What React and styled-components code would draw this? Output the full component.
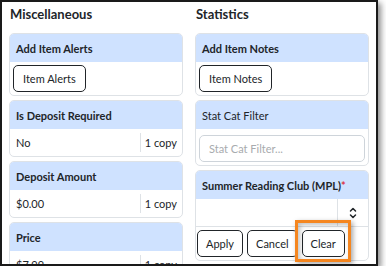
import React from 'react';
import styled, { createGlobalStyle } from 'styled-components';

const GlobalStyle = createGlobalStyle`
  body {
    margin: 0;
    background: #fff;
    font-family: Lato, "Noto Sans", sans-serif;
    color: #212529;
  }
`;

const Frame = styled.div`
  position: relative;
  width: 374px;
  height: 262px;
  border: 2px solid #1a1a1a;
  box-shadow: 3px 3px 6px rgba(0, 0, 0, 0.45);
  overflow: hidden;
  background: #fff;
`;

const Columns = styled.div`
  display: grid;
  grid-template-columns: 174px 174px;
  column-gap: 12px;
  padding-left: 7px;
`;

const Column = styled.div`
  display: flex;
  flex-direction: column;
`;

const Heading = styled.h3`
  margin: 0;
  height: 31px;
  line-height: 25px;
  font-size: 13px;
  font-weight: 700;
  padding-left: 1px;
`;

const Card = styled.div`
  border: 1px solid #dee2e6;
  border-radius: 5px;
  margin-bottom: 4px;
  overflow: hidden;
`;

const CardHeader = styled.div`
  height: 28px;
  display: flex;
  align-items: center;
  padding-left: 6px;
  background: #cfe2ff;
  font-size: 11px;
  font-weight: ${(p) => (p.plain ? 400 : 700)};
  white-space: nowrap;
`;

const Required = styled.span`
  color: #dc3545;
`;

const CardBody = styled.div`
  padding: 3px 3px 3px ${(p) => (p.tight ? 1 : 3)}px;
  display: flex;
  gap: 4px;
`;

const OutlineButton = styled.button`
  box-sizing: border-box;
  height: 27px;
  padding: 0 ${(p) => p.pad}px;
  border: 1px solid #212529;
  border-radius: 5px;
  background: #fff;
  font-family: inherit;
  font-size: 11px;
  color: #212529;
`;

const ValueRow = styled.div`
  height: 27px;
  display: flex;
  align-items: center;
  font-size: 11px;
`;

const Value = styled.div`
  flex: 1;
  padding-left: 6px;
`;

const Count = styled.div`
  border-left: 1px solid #dee2e6;
  padding: 0 5px 0 4px;
  line-height: 19px;
`;

const FilterBody = styled.div`
  padding: 6px 3px 3px;
`;

const TextInput = styled.input`
  box-sizing: border-box;
  width: 100%;
  height: 27px;
  border: 1px solid #ced4da;
  border-radius: 5px;
  padding: 0 9px;
  font-family: inherit;
  font-size: 11px;
  &::placeholder {
    color: #a8abae;
  }
`;

const SelectBox = styled.div`
  display: flex;
  height: 27px;
  border-bottom: 1px solid #dee2e6;
`;

const SelectField = styled.div`
  flex: 1;
  border-right: 1px solid #dee2e6;
`;

const SelectArrow = styled.div`
  width: 30px;
  display: flex;
  align-items: center;
  justify-content: center;
`;

const Highlight = styled.div`
  position: absolute;
  left: 293px;
  top: 218px;
  width: 50px;
  height: 36px;
  border: 3px solid #f5861f;
  box-shadow: 2px 2px 5px rgba(0, 0, 0, 0.35), inset 2px 2px 5px rgba(0, 0, 0, 0.25);
  pointer-events: none;
`;

const Updown = () => (
  <svg width="8" height="12" viewBox="0 0 8 12" fill="none" stroke="#212529" strokeWidth="1.5" strokeLinecap="round" strokeLinejoin="round">
    <path d="M1.5 4 L4 1.5 L6.5 4" />
    <path d="M1.5 8 L4 10.5 L6.5 8" />
  </svg>
);

const ButtonCard = ({ title, label }) => (
  <Card>
    <CardHeader>{title}</CardHeader>
    <CardBody>
      <OutlineButton pad={9}>{label}</OutlineButton>
    </CardBody>
  </Card>
);

const CopyCard = ({ title, value }) => (
  <Card>
    <CardHeader>{title}</CardHeader>
    <ValueRow>
      <Value>{value}</Value>
      <Count>1 copy</Count>
    </ValueRow>
  </Card>
);

export default function App() {
  return (
    <>
      <GlobalStyle />
      <Frame>
        <Columns>
          <Column>
            <Heading>Miscellaneous</Heading>
            <ButtonCard title="Add Item Alerts" label="Item Alerts" />
            <CopyCard title="Is Deposit Required" value="No" />
            <CopyCard title="Deposit Amount" value="$0.00" />
            <CopyCard title="Price" value="$7.99" />
          </Column>
          <Column>
            <Heading>Statistics</Heading>
            <ButtonCard title="Add Item Notes" label="Item Notes" />
            <Card>
              <CardHeader plain>Stat Cat Filter</CardHeader>
              <FilterBody>
                <TextInput placeholder="Stat Cat Filter..." />
              </FilterBody>
            </Card>
            <Card>
              <CardHeader>
                Summer Reading Club (MPL)<Required>*</Required>
              </CardHeader>
              <SelectBox>
                <SelectField />
                <SelectArrow>
                  <Updown />
                </SelectArrow>
              </SelectBox>
              <CardBody tight>
                <OutlineButton pad={8}>Apply</OutlineButton>
                <OutlineButton pad={8}>Cancel</OutlineButton>
                <OutlineButton pad={8}>Clear</OutlineButton>
              </CardBody>
            </Card>
            <Card>
              <CardHeader />
            </Card>
          </Column>
        </Columns>
        <Highlight />
      </Frame>
    </>
  );
}
